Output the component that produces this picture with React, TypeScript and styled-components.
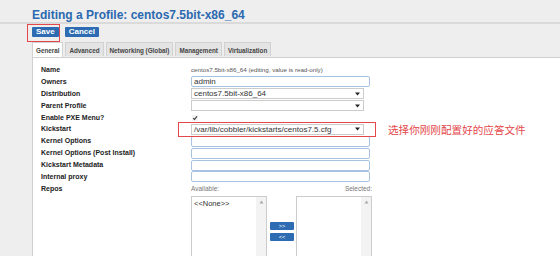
import * as React from "react";
import styled, { createGlobalStyle } from "styled-components";

const GlobalStyle = createGlobalStyle`
  html, body {
    margin: 0;
    padding: 0;
    background: #eeeeee;
    font-family: "Liberation Sans", Arial, sans-serif;
  }
`;

const tabs = ["General", "Advanced", "Networking (Global)", "Management", "Virtualization"];

function Arrow(): JSX.Element {
  return (
    <svg width="5" height="4" viewBox="0 0 5 4">
      <path d="M0 0.5 L5 0.5 L2.5 3.5 Z" fill="#222" />
    </svg>
  );
}

function Select({ value }: { value?: string }): JSX.Element {
  return (
    <SelectBox>
      <span>{value}</span>
      <Arrow />
    </SelectBox>
  );
}

function ListBox({ items }: { items: string[] }): JSX.Element {
  return (
    <List>
      <ListItems>
        {items.map((i) => (
          <div key={i}>{i}</div>
        ))}
      </ListItems>
      <ScrollTrack>
        <svg width="5" height="4" viewBox="0 0 5 4">
          <path d="M0.5 3.5 L4.5 3.5 L2.5 0.5 Z" fill="#aaa" />
        </svg>
      </ScrollTrack>
    </List>
  );
}

function App(): JSX.Element {
  return (
    <>
      <GlobalStyle />
      <Page>
        <Title>Editing a Profile: centos7.5bit-x86_64</Title>
        <Toolbar>
          <Marked>
            <Button>Save</Button>
            <SaveMark />
          </Marked>
          <Button>Cancel</Button>
        </Toolbar>
        <TabBar>
          {tabs.map((t, i) => (
            <Tab key={t} $active={i === 0}>
              {t}
            </Tab>
          ))}
        </TabBar>
        <Panel>
          <Form>
            <Label>Name</Label>
            <ReadOnly>centos7.5bit-x86_64 (editing, value is read-only)</ReadOnly>
            <Spacer />

            <Label>Owners</Label>
            <TextInput>admin</TextInput>
            <Spacer />

            <Label>Distribution</Label>
            <Select value="centos7.5bit-x86_64" />
            <Spacer />

            <Label>Parent Profile</Label>
            <Select />
            <Spacer />

            <Label>Enable PXE Menu?</Label>
            <Check>
              <svg width="6" height="6" viewBox="0 0 6 6">
                <rect x="0" y="0" width="6" height="6" fill="#f2f2f2" />
                <path d="M1.2 3.2 L2.5 4.5 L4.9 1.4" stroke="#333" strokeWidth="1.1" fill="none" />
              </svg>
            </Check>
            <Spacer />

            <Label>Kickstart</Label>
            <Marked>
              <Select value="/var/lib/cobbler/kickstarts/centos7.5.cfg" />
              <KickstartMark />
            </Marked>
            <Note>选择你刚刚配置好的应答文件</Note>

            <Label>Kernel Options</Label>
            <TextInput />
            <Spacer />

            <Label>Kernel Options (Post Install)</Label>
            <TextInput />
            <Spacer />

            <Label>Kickstart Metadata</Label>
            <TextInput />
            <Spacer />

            <Label>Internal proxy</Label>
            <TextInput />
            <Spacer />

            <Label>Repos</Label>
            <Repos>
              <RepoHead>
                <span>Available:</span>
                <span>Selected:</span>
              </RepoHead>
              <RepoBody>
                <ListBox items={["<<None>>"]} />
                <MoveButtons>
                  <SmallButton>&gt;&gt;</SmallButton>
                  <SmallButton>&lt;&lt;</SmallButton>
                </MoveButtons>
                <ListBox items={[]} />
              </RepoBody>
            </Repos>
          </Form>
        </Panel>
      </Page>
    </>
  );
}

const Page = styled.div`
  display: flex;
  flex-direction: column;
  height: 256px;
  overflow: hidden;
  padding-left: 32px;
`;

const Title = styled.h1`
  margin: 0 0 0 -32px;
  padding: 8px 0 0 32px;
  height: 14px;
  line-height: 14px;
  font-size: 12px;
  font-weight: bold;
  color: #2b69b0;
  border-bottom: 2px solid #dadada;
  white-space: nowrap;
`;

const Toolbar = styled.div`
  display: flex;
  gap: 6px;
  margin-top: 3px;
`;

const Marked = styled.div`
  position: relative;
  display: flex;
`;

const Button = styled.div`
  height: 10px;
  line-height: 10px;
  padding: 0 4px;
  background: #2d6cb3;
  border-radius: 1px;
  color: #ffffff;
  font-size: 8px;
  font-weight: bold;
`;

const SaveMark = styled.div`
  position: absolute;
  left: -5px;
  top: -3px;
  right: -1px;
  bottom: -5px;
  border: 1.5px solid #e2474b;
`;

const KickstartMark = styled.div`
  position: absolute;
  left: -13px;
  top: -2px;
  right: -4px;
  bottom: -2px;
  border: 1.5px solid #e2474b;
`;

const TabBar = styled.div`
  display: flex;
  gap: 2px;
  margin-top: 5px;
  height: 15px;
`;

const Tab = styled.div<{ $active?: boolean }>`
  position: relative;
  height: ${(p) => (p.$active ? "15px" : "14px")};
  line-height: 15px;
  padding: 0 3px;
  font-size: 6.3px;
  font-weight: bold;
  color: #444;
  background: ${(p) => (p.$active ? "#ffffff" : "#e4e4e4")};
  border: 1px solid #d2d2d2;
  border-bottom: none;
  box-sizing: border-box;
  margin-bottom: ${(p) => (p.$active ? "-1px" : "0")};
  z-index: ${(p) => (p.$active ? 1 : 0)};
`;

const Panel = styled.div`
  flex: 1;
  background: #ffffff;
  border-top: 1px solid #d0d0d0;
  border-left: 1px solid #d0d0d0;
  padding: 6px 0 0 8px;
`;

const Form = styled.div`
  display: grid;
  grid-template-columns: 150px 181px auto;
  grid-auto-rows: 11.9px;
  align-items: center;
`;

const Label = styled.div`
  align-self: start;
  line-height: 11.9px;
  font-size: 7px;
  font-weight: bold;
  color: #222;
  white-space: nowrap;
`;

const Spacer = styled.div``;

const ReadOnly = styled.div`
  font-size: 6.2px;
  color: #555;
  white-space: nowrap;
`;

const TextInput = styled.div`
  width: 179px;
  height: 11px;
  box-sizing: border-box;
  border: 1px solid #a8c3e2;
  border-radius: 2px;
  padding-left: 2px;
  font-size: 8px;
  line-height: 9px;
  color: #333;
`;

const SelectBox = styled.div`
  width: 173px;
  height: 11px;
  box-sizing: border-box;
  border: 1px solid #cccccc;
  padding: 0 3px 0 2px;
  display: flex;
  align-items: center;
  justify-content: space-between;
  font-size: 8px;
  color: #333;
  white-space: nowrap;
`;

const Check = styled.div`
  display: flex;
  padding-left: 1px;
`;

const Note = styled.div`
  padding-left: 16px;
  font-family: "Noto Sans CJK SC", sans-serif;
  font-size: 10.6px;
  color: #e4474b;
  white-space: nowrap;
`;

const Repos = styled.div`
  grid-column: 2 / span 2;
  align-self: start;
  width: 181px;
  display: flex;
  flex-direction: column;
`;

const RepoHead = styled.div`
  display: flex;
  justify-content: space-between;
  height: 13px;
  line-height: 11px;
  font-size: 6.5px;
  color: #777;
`;

const RepoBody = styled.div`
  display: flex;
  align-items: center;
`;

const List = styled.div`
  width: 76px;
  height: 80px;
  box-sizing: border-box;
  border: 1px solid #cccccc;
  display: flex;
`;

const ListItems = styled.div`
  flex: 1;
  padding: 2px 0 0 2px;
  font-size: 7.5px;
  color: #333;
`;

const ScrollTrack = styled.div`
  width: 10px;
  background: #f3f3f3;
  display: flex;
  justify-content: center;
  padding-top: 3px;
`;

const MoveButtons = styled.div`
  display: flex;
  flex-direction: column;
  gap: 3px;
  margin: 0 2px 0 3px;
  align-self: flex-start;
  margin-top: 26px;
`;

const SmallButton = styled.div`
  width: 24px;
  height: 8px;
  line-height: 8px;
  background: #2d6cb3;
  border-radius: 1px;
  color: #fff;
  font-size: 5.5px;
  text-align: center;
`;

export default App;
